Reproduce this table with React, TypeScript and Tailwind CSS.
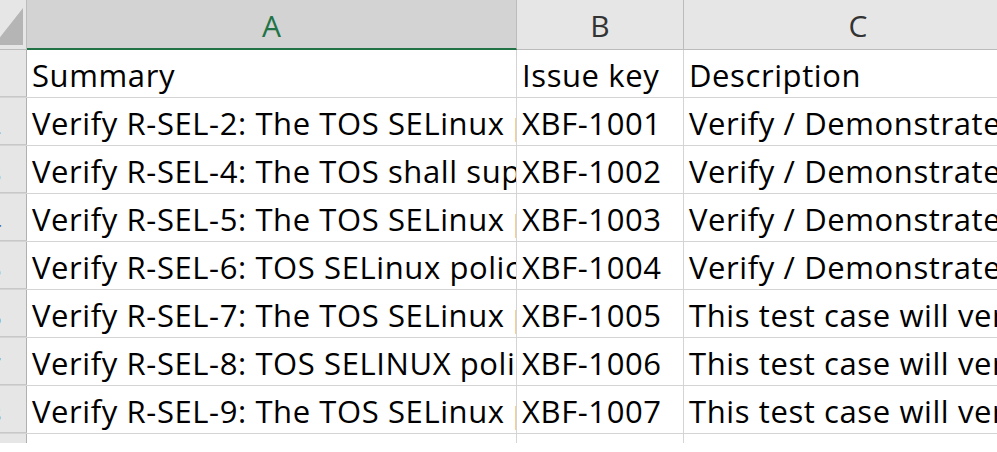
const rows = [
  { a: 'Summary', b: 'Issue key', c: 'Description' },
  { a: 'Verify R-SEL-2: The TOS SELinux policy shall be enforced', b: 'XBF-1001', c: 'Verify / Demonstrate that the policy is enforced' },
  { a: 'Verify R-SEL-4: The TOS shall support SELinux', b: 'XBF-1002', c: 'Verify / Demonstrate that the TOS supports it' },
  { a: 'Verify R-SEL-5: The TOS SELinux policy shall define', b: 'XBF-1003', c: 'Verify / Demonstrate that the policy defines' },
  { a: 'Verify R-SEL-6: TOS SELinux policy shall', b: 'XBF-1004', c: 'Verify / Demonstrate that the policy' },
  { a: 'Verify R-SEL-7: The TOS SELinux policy shall', b: 'XBF-1005', c: 'This test case will verify the policy' },
  { a: 'Verify R-SEL-8: TOS SELINUX policy shall', b: 'XBF-1006', c: 'This test case will verify the policy' },
  { a: 'Verify R-SEL-9: The TOS SELinux policy shall', b: 'XBF-1007', c: 'This test case will verify the policy' },
];

function Cell({ text, width }: { text: string; width: string }) {
  return (
    <div className={`${width} shrink-0 h-full flex items-end pb-[6px] pl-[5px] border-r border-[#d4d4d4] overflow-hidden whitespace-nowrap`}>
      {text}
    </div>
  );
}

export default function App() {
  return (
    <div className="w-[997px] h-[452px] bg-white overflow-hidden text-black font-['Open_Sans','Liberation_Sans',sans-serif]">
      {/* column headers */}
      <div className="flex h-[50px]">
        <div className="w-[27px] shrink-0 bg-[#e6e6e6] border-r border-b border-[#bcbcbc] overflow-hidden">
          <svg width="26" height="49" viewBox="0 0 26 49">
            <polygon points="-6,45 23,45 23,8" fill="#b5b5b5" />
          </svg>
        </div>
        <div className="w-[490px] shrink-0 bg-[#d3d3d3] border-r border-[#bcbcbc] border-b-2 border-b-[#217346] flex items-center justify-center text-[30px] text-[#217346] pt-[2px]">
          A
        </div>
        <div className="w-[167px] shrink-0 bg-[#e6e6e6] border-r border-b border-[#bcbcbc] flex items-center justify-center text-[30px] text-[#333] pt-[2px]">
          B
        </div>
        <div className="w-[348px] shrink-0 bg-[#e6e6e6] border-b border-[#bcbcbc] flex items-center justify-center text-[30px] text-[#333] pt-[2px]">
          C
        </div>
      </div>

      {rows.map((r, i) => (
        <div key={i} className="flex h-[48px] text-[31px] tracking-[0.6px] leading-none border-b border-[#d4d4d4]">
          <div className="w-[27px] shrink-0 h-full bg-[#e6e6e6] border-r border-[#b0b0b0] border-b border-b-[#c8c8c8] overflow-hidden relative">
            <span className="absolute right-[24px] bottom-[8px] text-[22px] text-[#4a6a9a]">{i + 1}</span>
          </div>
          <Cell text={r.a} width="w-[490px]" />
          <Cell text={r.b} width="w-[167px]" />
          <div className="flex-1 h-full flex items-end pb-[6px] pl-[5px] overflow-hidden whitespace-nowrap">{r.c}</div>
        </div>
      ))}

      {/* partial next row */}
      <div className="flex h-[9px]">
        <div className="w-[27px] shrink-0 bg-[#e6e6e6] border-r border-[#b0b0b0]" />
        <div className="w-[490px] shrink-0 border-r border-[#d4d4d4]" />
        <div className="w-[167px] shrink-0 border-r border-[#d4d4d4]" />
      </div>
    </div>
  );
}
